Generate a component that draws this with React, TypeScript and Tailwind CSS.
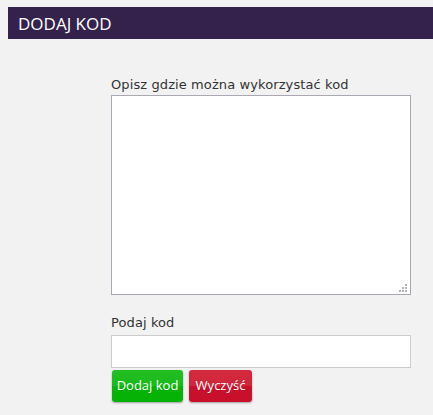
import React from "react";

export default function App() {
  return (
    <div className="min-h-[415px] w-[433px] bg-[#f2f2f2] pt-[7px] pl-2 overflow-hidden">
      <div className="h-[32px] bg-[#35224c] pl-[10px] flex items-center">
        <span className="text-white text-[17px] leading-none" style={{ fontFamily: '"Open Sans", sans-serif' }}>DODAJ KOD</span>
      </div>
      <div className="pl-[103px] pt-[38px]" style={{ fontFamily: '"DejaVu Sans", Verdana, sans-serif' }}>
        <div className="text-[13px] leading-[16px] text-[#333] h-[18px] tracking-[0.1px]">Opisz gdzie można wykorzystać kod</div>
        <div className="relative w-[300px] h-[200px]">
          <textarea className="block w-[300px] h-[200px] bg-white border border-[#aaa9b3] resize-none outline-none" />
          <svg className="absolute right-[4px] bottom-[3px]" width="8" height="8" viewBox="0 0 8 8">
            <rect x="6" y="0" width="2" height="2" fill="#b5b5b5" />
            <rect x="3" y="3" width="2" height="2" fill="#b5b5b5" />
            <rect x="6" y="3" width="2" height="2" fill="#b5b5b5" />
            <rect x="0" y="6" width="2" height="2" fill="#b5b5b5" />
            <rect x="3" y="6" width="2" height="2" fill="#b5b5b5" />
            <rect x="6" y="6" width="2" height="2" fill="#b5b5b5" />
          </svg>
        </div>
        <div className="text-[13px] leading-[16px] text-[#333] mt-[20px] h-[20px] tracking-[0.1px]">Podaj kod</div>
        <input className="block w-[300px] h-[33px] bg-white border border-[#cccccc] outline-none" />
        <div className="flex gap-[6px] mt-[2px] ml-[1px]" style={{ fontFamily: '"Open Sans", sans-serif' }}>
          <button className="w-[71px] h-[32px] rounded-[3px] text-white text-[13px] bg-[linear-gradient(#22be22_0%,#1cba1c_50%,#06b206_52%,#06b206_100%)] shadow-[0_1px_2px_rgba(0,0,0,0.35)]">Dodaj kod</button>
          <button className="w-[63px] h-[32px] rounded-[3px] text-white text-[13px] bg-[linear-gradient(#d42a3e_0%,#d02639_50%,#c8102b_52%,#c8102b_100%)] shadow-[0_1px_2px_rgba(0,0,0,0.35)]">Wyczyść</button>
        </div>
      </div>
    </div>
  );
}
